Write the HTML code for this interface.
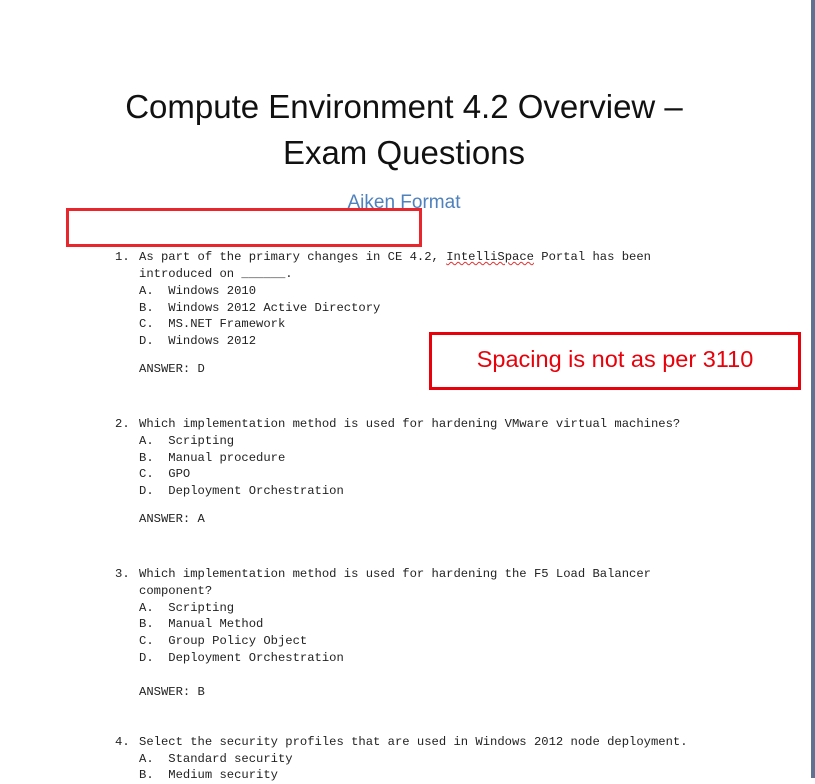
<!DOCTYPE html>
<html><head><meta charset="utf-8"><style>
html,body{margin:0;padding:0;}
body{width:815px;height:778px;overflow:hidden;background:#fff;position:relative;font-family:"Liberation Sans",sans-serif;}
.edge{position:absolute;left:811px;top:0;width:4px;height:778px;background:#5d7391;}
.t{position:absolute;left:0;width:808px;text-align:center;color:#111;font-size:33px;line-height:36px;white-space:nowrap;}
.m{position:absolute;font-family:"Liberation Mono",monospace;font-size:12.2px;line-height:17px;color:#222;white-space:pre;}
.box{position:absolute;border:3px solid #e8262b;box-sizing:border-box;}
</style></head><body>
<div class="edge"></div>
<div class="t" style="top:89px">Compute Environment 4.2 Overview –</div>
<div class="t" style="top:135px">Exam Questions</div>
<div style="position:absolute;left:0;width:808px;text-align:center;top:191px;font-size:19px;line-height:24px;color:#4f81bd;">Aiken Format</div>
<div class="box" style="left:66px;top:208px;width:356px;height:39px;"></div>
<div class="box" style="left:429px;top:332px;width:372px;height:58px;border-color:#e8000a;"></div>
<div style="position:absolute;left:429px;top:345px;width:372px;text-align:center;font-size:23.5px;line-height:28px;color:#e8000a;">Spacing is not as per 3110</div>

<div class="m" style="left:115px;top:249px">1.</div>
<div class="m" style="left:139px;top:249px">As part of the primary changes in CE 4.2, <span style="text-decoration:underline wavy #d33;text-decoration-thickness:1px">IntelliSpace</span> Portal has been</div>
<div class="m" style="left:139px;top:266px">introduced on ______.</div>
<div class="m" style="left:139px;top:283px">A.  Windows 2010</div>
<div class="m" style="left:139px;top:300px">B.  Windows 2012 Active Directory</div>
<div class="m" style="left:139px;top:316px">C.  MS.NET Framework</div>
<div class="m" style="left:139px;top:333px">D.  Windows 2012</div>
<div class="m" style="left:139px;top:361px">ANSWER: D</div>

<div class="m" style="left:115px;top:416px">2.</div>
<div class="m" style="left:139px;top:416px">Which implementation method is used for hardening VMware virtual machines?</div>
<div class="m" style="left:139px;top:433px">A.  Scripting</div>
<div class="m" style="left:139px;top:450px">B.  Manual procedure</div>
<div class="m" style="left:139px;top:466px">C.  GPO</div>
<div class="m" style="left:139px;top:483px">D.  Deployment Orchestration</div>
<div class="m" style="left:139px;top:511px">ANSWER: A</div>

<div class="m" style="left:115px;top:566px">3.</div>
<div class="m" style="left:139px;top:566px">Which implementation method is used for hardening the F5 Load Balancer</div>
<div class="m" style="left:139px;top:583px">component?</div>
<div class="m" style="left:139px;top:600px">A.  Scripting</div>
<div class="m" style="left:139px;top:616px">B.  Manual Method</div>
<div class="m" style="left:139px;top:633px">C.  Group Policy Object</div>
<div class="m" style="left:139px;top:650px">D.  Deployment Orchestration</div>
<div class="m" style="left:139px;top:684px">ANSWER: B</div>

<div class="m" style="left:115px;top:734px">4.</div>
<div class="m" style="left:139px;top:734px">Select the security profiles that are used in Windows 2012 node deployment.</div>
<div class="m" style="left:139px;top:751px">A.  Standard security</div>
<div class="m" style="left:139px;top:767px">B.  Medium security</div>
</body></html>
